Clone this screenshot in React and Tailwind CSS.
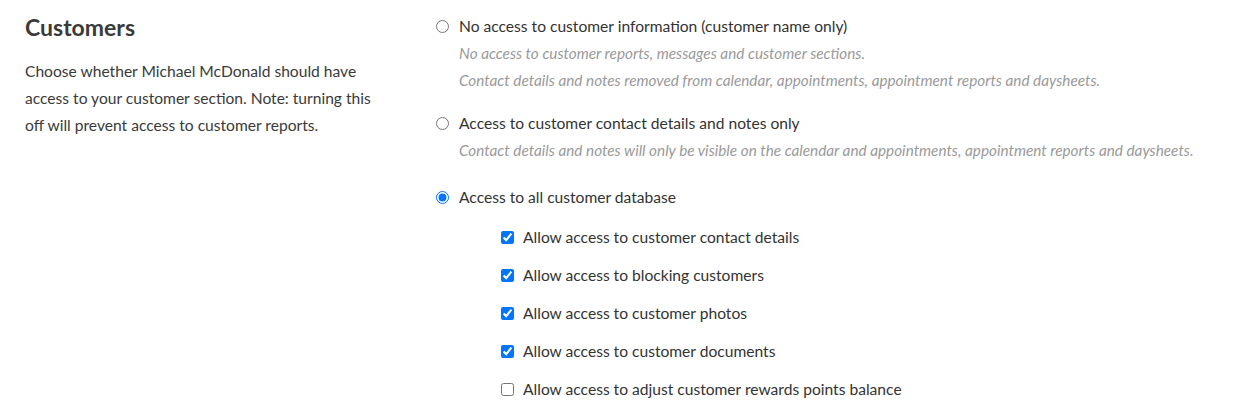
import React from "react";

const font = { fontFamily: "Lato, 'Open Sans', sans-serif" };

function Radio({ checked, label, desc = [] }) {
  return (
    <div>
      <label className="flex items-center h-[27px] text-[15.6px] text-[#333]">
        <input
          type="radio"
          name="cust"
          defaultChecked={checked}
          className="w-[13px] h-[13px] m-0 mr-[10px] accent-[#0075ff]"
        />
        <span>{label}</span>
      </label>
      {desc.map((d, i) => (
        <div key={i} className="pl-[23px] h-[27px] leading-[27px] text-[15.3px] italic text-[#9a9a9a] whitespace-nowrap">
          {d}
        </div>
      ))}
    </div>
  );
}

function Check({ checked, label }) {
  return (
    <label className="flex items-center h-[27px] text-[15.6px] text-[#333]">
      <input
        type="checkbox"
        defaultChecked={checked}
        className="w-[13px] h-[13px] m-0 mr-[9px] accent-[#0075ff]"
      />
      <span>{label}</span>
    </label>
  );
}

export default function App() {
  return (
    <div className="w-[1237px] h-[417px] bg-white flex pt-[13px] overflow-hidden" style={font}>
      <div className="w-[436px] pl-[25px] shrink-0">
        <h2 className="text-[23px] leading-[28px] font-bold text-[#3a3a3a]">Customers</h2>
        <p className="mt-[17px] text-[15.6px] leading-[27px] text-[#3a3a3a] w-[352px]">
          Choose whether Michael McDonald should have access to your customer section. Note: turning this off will prevent access to customer reports.
        </p>
      </div>
      <div className="flex flex-col">
        <Radio
          label="No access to customer information (customer name only)"
          desc={[
            "No access to customer reports, messages and customer sections.",
            "Contact details and notes removed from calendar, appointments, appointment reports and daysheets.",
          ]}
        />
        <div className="mt-[16px]">
          <Radio
            label="Access to customer contact details and notes only"
            desc={[
              "Contact details and notes will only be visible on the calendar and appointments, appointment reports and daysheets.",
            ]}
          />
        </div>
        <div className="mt-[20px]">
          <Radio checked label="Access to all customer database" />
        </div>
        <div className="pl-[65px] mt-[13px] flex flex-col gap-[11px]">
          <Check checked label="Allow access to customer contact details" />
          <Check checked label="Allow access to blocking customers" />
          <Check checked label="Allow access to customer photos" />
          <Check checked label="Allow access to customer documents" />
          <Check label="Allow access to adjust customer rewards points balance" />
        </div>
      </div>
    </div>
  );
}
